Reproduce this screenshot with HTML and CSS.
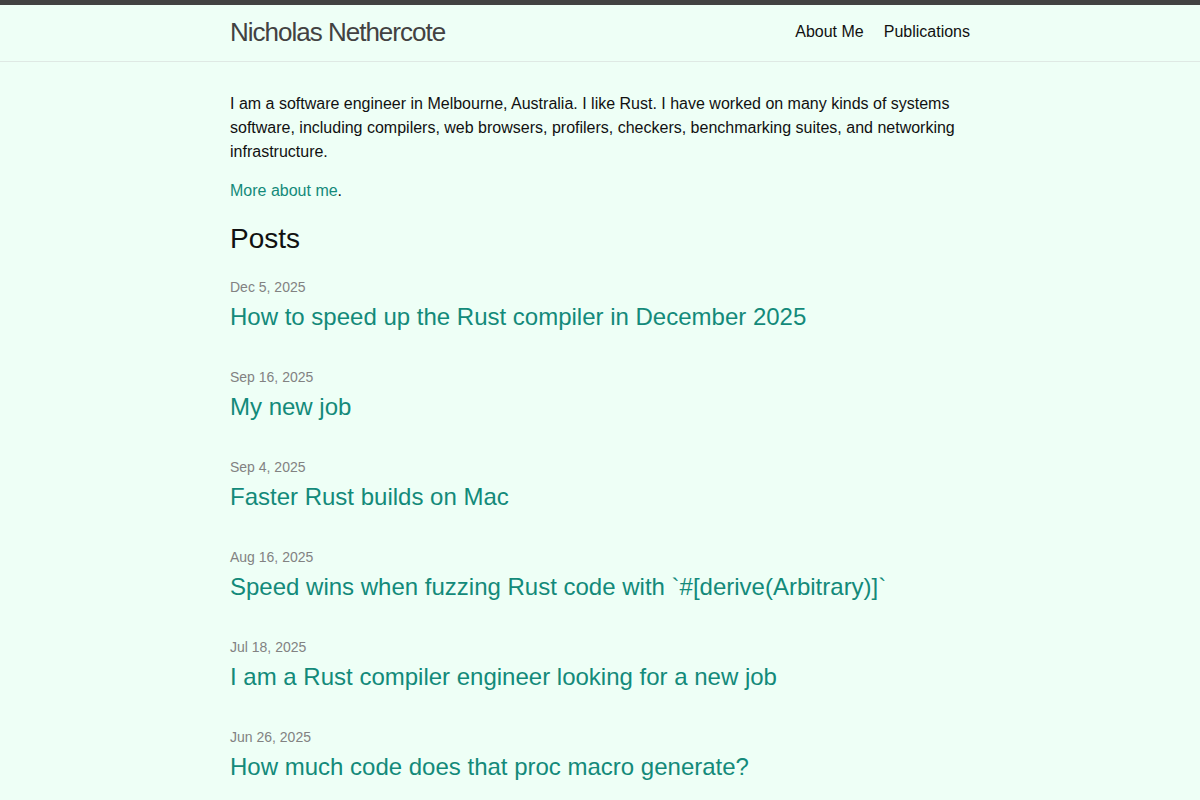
FILE: index.html
```html
<!DOCTYPE html>
<html>
  <head>
    <title>Nicholas Nethercote</title>
    <link rel="stylesheet" href="styles.css">
  </head>
  <body>
    <header class="site-header">
      <div class="wrapper header-row">
        <a class="site-title" href="#">Nicholas Nethercote</a>
        <nav class="site-nav">
          <a class="page-link" href="#">About Me</a>
          <a class="page-link" href="#">Publications</a>
        </nav>
      </div>
    </header>

    <main class="page-content">
      <div class="wrapper">
        <p>I am a software engineer in Melbourne, Australia. I like Rust. I have worked on many kinds of systems software, including compilers, web browsers, profilers, checkers, benchmarking suites, and networking infrastructure.</p>
        <p><a href="#">More about me</a>.</p>

        <h2 class="post-list-heading">Posts</h2>
        <ul class="post-list">
          <li>
            <span class="post-meta">Dec 5, 2025</span>
            <h3><a class="post-link" href="#">How to speed up the Rust compiler in December 2025</a></h3>
          </li>
          <li>
            <span class="post-meta">Sep 16, 2025</span>
            <h3><a class="post-link" href="#">My new job</a></h3>
          </li>
          <li>
            <span class="post-meta">Sep 4, 2025</span>
            <h3><a class="post-link" href="#">Faster Rust builds on Mac</a></h3>
          </li>
          <li>
            <span class="post-meta">Aug 16, 2025</span>
            <h3><a class="post-link" href="#">Speed wins when fuzzing Rust code with `#[derive(Arbitrary)]`</a></h3>
          </li>
          <li>
            <span class="post-meta">Jul 18, 2025</span>
            <h3><a class="post-link" href="#">I am a Rust compiler engineer looking for a new job</a></h3>
          </li>
          <li>
            <span class="post-meta">Jun 26, 2025</span>
            <h3><a class="post-link" href="#">How much code does that proc macro generate?</a></h3>
          </li>
        </ul>
      </div>
    </main>
  </body>
</html>
```

FILE: styles.css
```css
body {
  margin: 0;
  font-family: "Liberation Sans", Arial, sans-serif;
  font-size: 16px;
  line-height: 1.5;
  color: #111;
  background-color: #eefff6;
}

a {
  color: #138a7a;
  text-decoration: none;
}

.wrapper {
  max-width: 740px;
  margin: 0 auto;
  padding: 0 30px;
}

.site-header {
  border-top: 5px solid #424242;
  border-bottom: 1px solid #dfe9e4;
  min-height: 56px;
}

.header-row {
  display: flex;
  justify-content: space-between;
  align-items: center;
  height: 56px;
}

.site-title {
  font-size: 26px;
  line-height: 54px;
  letter-spacing: -1px;
  color: #424242;
  margin-bottom: 2px;
}

.site-nav {
  display: flex;
  gap: 20px;
  line-height: 56px;
  margin-bottom: 2px;
}

.page-link {
  color: #111;
}

.page-content {
  padding: 30px 0 0;
}

p {
  margin: 0 0 15px;
}

.post-list-heading {
  font-size: 28px;
  font-weight: 400;
  line-height: 42px;
  margin: 0 0 17px;
}

.post-list {
  list-style: none;
  margin: 0;
  padding: 0;
}

.post-list li {
  margin-bottom: 32px;
}

.post-meta {
  display: block;
  font-size: 14px;
  line-height: 21px;
  color: #828282;
}

.post-list h3 {
  margin: 1px 0 0;
  font-size: 24px;
  font-weight: 400;
  line-height: 36px;
}
```
